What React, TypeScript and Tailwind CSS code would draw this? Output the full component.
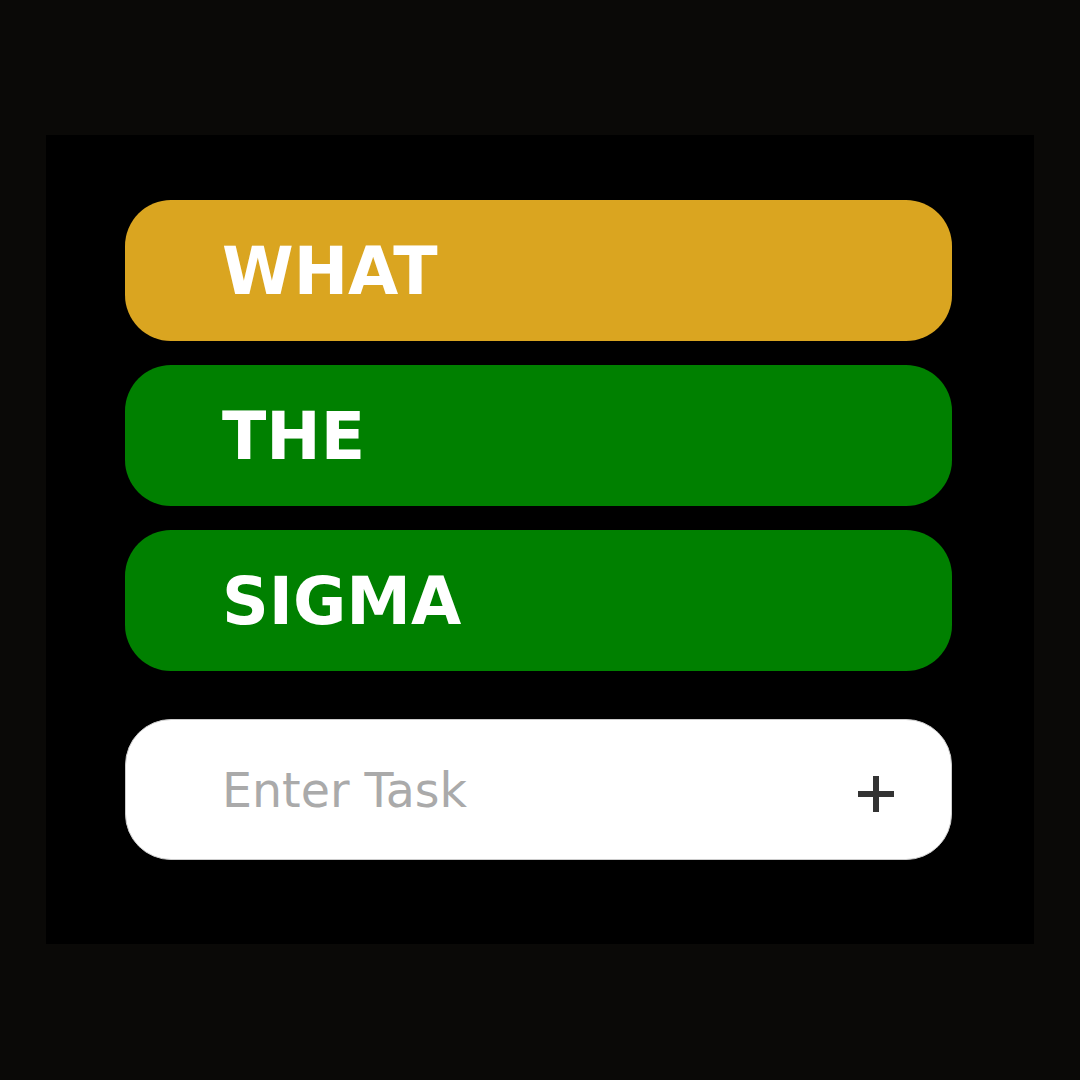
export default function App() {
  const items = [
    { text: "WHAT", bg: "bg-[#daa520]" },
    { text: "THE", bg: "bg-[#008000]" },
    { text: "SIGMA", bg: "bg-[#008000]" },
  ];
  return (
    <div className="w-[1080px] h-[1080px] bg-[#0a0907] pt-[135px] pl-[46px]" style={{ fontFamily: '"DejaVu Sans", Verdana, sans-serif' }}>
      <div className="w-[988px] h-[809px] bg-black pt-[65px] pl-[79px]">
        <div className="flex flex-col gap-[24px] w-[827px]">
          {items.map((it) => (
            <div key={it.text} className={`${it.bg} h-[141px] rounded-[46px] flex items-center pl-[97px]`}>
              <span className="text-white font-bold text-[65px] leading-none mt-[2px]">{it.text}</span>
            </div>
          ))}
        </div>
        <div className="mt-[48px] w-[827px] h-[141px] bg-white rounded-[46px] border border-[#ccc] flex items-center pl-[96px] pr-[57px] justify-between">
          <span className="text-[#aaaaaa] text-[47.5px] leading-none mt-[2px]">Enter Task</span>
          <svg width="36" height="36" viewBox="0 0 36 36" className="mt-[8px]">
            <rect x="0" y="15" width="36" height="6" fill="#333" />
            <rect x="15" y="0" width="6" height="36" fill="#333" />
          </svg>
        </div>
      </div>
    </div>
  );
}
